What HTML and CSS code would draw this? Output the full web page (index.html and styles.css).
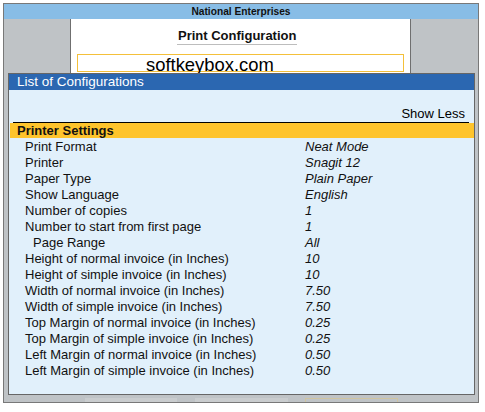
FILE: index.html
```html
<!DOCTYPE html>
<html>
<head>
<meta charset="utf-8">
<link rel="stylesheet" href="styles.css">
</head>
<body>
<div class="app">
  <div class="titlebar">National Enterprises</div>
  <div class="main">
    <div class="sheet">
      <div class="heading">Print Configuration</div>
      <div class="inputbox"><span class="brand">softkeybox.com</span></div>
    </div>
  </div>
  <div class="footer">
    <span class="ghost g1"></span>
    <span class="ghost g2"></span>
    <span class="ghost g3"></span>
  </div>

  <div class="panel">
    <div class="panel-head">List of Configurations</div>
    <div class="panel-body">
      <div class="showless">Show Less</div>
      <div class="rule"></div>
      <div class="section">Printer Settings</div>
      <div class="rows">
        <div class="lbl">Print Format</div><div class="val">Neat Mode</div>
        <div class="lbl">Printer</div><div class="val">Snagit 12</div>
        <div class="lbl">Paper Type</div><div class="val">Plain Paper</div>
        <div class="lbl">Show Language</div><div class="val">English</div>
        <div class="lbl">Number of copies</div><div class="val">1</div>
        <div class="lbl">Number to start from first page</div><div class="val">1</div>
        <div class="lbl sub">Page Range</div><div class="val">All</div>
        <div class="lbl">Height of normal invoice (in Inches)</div><div class="val">10</div>
        <div class="lbl">Height of simple invoice (in Inches)</div><div class="val">10</div>
        <div class="lbl">Width of normal invoice (in Inches)</div><div class="val">7.50</div>
        <div class="lbl">Width of simple invoice (in Inches)</div><div class="val">7.50</div>
        <div class="lbl">Top Margin of normal invoice (in Inches)</div><div class="val">0.25</div>
        <div class="lbl">Top Margin of simple invoice (in Inches)</div><div class="val">0.25</div>
        <div class="lbl">Left Margin of normal invoice (in Inches)</div><div class="val">0.50</div>
        <div class="lbl">Left Margin of simple invoice (in Inches)</div><div class="val">0.50</div>
      </div>
    </div>
  </div>
</div>
</body>
</html>
```

FILE: styles.css
```css
* { box-sizing: border-box; }
html, body { margin: 0; padding: 0; background: #ffffff; }
body { font-family: "Liberation Sans", Arial, sans-serif; color: #000; }

.app {
  position: relative;
  margin: 3px 0 0 3px;
  width: 476px;
  height: 400px;
  border: 1px solid #787878;
  background: #bfc3c6;
  display: flex;
  flex-direction: column;
}

.titlebar {
  height: 15px;
  background: #88bde6;
  font-weight: bold;
  font-size: 10.2px;
  line-height: 15px;
  text-align: center;
  color: #111;
}

.main {
  flex: 1;
  display: flex;
  padding-left: 66px;
}

.sheet {
  width: 341px;
  background: #ffffff;
  border-left: 1px solid #6f6f6f;
  border-right: 1px solid #6f6f6f;
  padding-top: 7px;
}

.heading {
  display: inline-block;
  margin-left: 106px;
  font-weight: bold;
  font-size: 13px;
  line-height: 16px;
  border-bottom: 1px solid #bdbdbd;
  padding: 0 1px;
  color: #111;
}

.inputbox {
  margin: 9px 0 0 6px;
  width: 327px;
  height: 18px;
  border: 1px solid #f4c03a;
  padding-left: 68px;
}

.brand {
  display: block;
  font-size: 18.4px;
  line-height: 20px;
  color: #000;
  white-space: nowrap;
}

.footer {
  height: 8px;
  position: relative;
  display: flex;
  align-items: flex-end;
  padding-left: 81px;
}
.ghost { display: block; height: 4px; }
.g1 { width: 92px; background: #c9ccce; }
.g2 { width: 93px; margin-left: 18px; background: #c9ccce; }
.g3 { width: 93px; margin-left: 17px; height: 4px; border: 1px solid #cfc4a0; border-bottom: none; }

.panel {
  position: absolute;
  left: 4px;
  top: 69px;
  width: 467px;
  height: 322px;
  border: 1px solid #666;
  background: #e1f0fb;
}

.panel-head {
  height: 16px;
  background: #2b67b1;
  color: #fff;
  font-size: 13.5px;
  line-height: 16px;
  padding-left: 8px;
}

.panel-body { padding-top: 16px; }

.showless {
  height: 16px;
  font-size: 13px;
  line-height: 16px;
  text-align: right;
  padding-right: 9px;
}

.rule {
  height: 1px;
  background: #000;
  margin: 0 5px 0 4px;
}

.section {
  height: 15px;
  margin-left: 1px;
  background: #fec42c;
  font-weight: bold;
  font-size: 13px;
  line-height: 15px;
  padding-left: 7px;
  color: #111;
}

.rows {
  display: grid;
  grid-template-columns: 280px 1fr;
  padding-left: 16px;
  padding-top: 1px;
  font-size: 13px;
  line-height: 16px;
}

.lbl { white-space: nowrap; color: #111; }
.lbl.sub { padding-left: 8px; }
.val { font-style: italic; color: #111; }
```
